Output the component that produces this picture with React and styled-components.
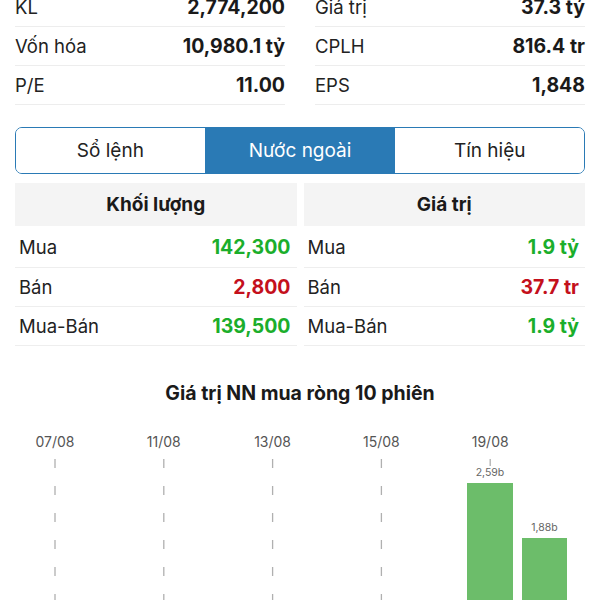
import React from 'react';
import styled, { createGlobalStyle } from 'styled-components';

const GlobalStyle = createGlobalStyle`
  body {
    margin: 0;
    background: #fff;
    font-family: Inter, "Noto Sans", sans-serif;
    color: #1c1c1c;
  }
`;

const stats = [
  [['KL', '2,774,200'], ['Giá trị', '37.3 tỷ']],
  [['Vốn hóa', '10,980.1 tỷ'], ['CPLH', '816.4 tr']],
  [['P/E', '11.00'], ['EPS', '1,848']],
];

const tabs = ['Sổ lệnh', 'Nước ngoài', 'Tín hiệu'];

const volume = [
  ['Mua', '142,300', 'up'],
  ['Bán', '2,800', 'down'],
  ['Mua-Bán', '139,500', 'up'],
];
const value = [
  ['Mua', '1.9 tỷ', 'up'],
  ['Bán', '37.7 tr', 'down'],
  ['Mua-Bán', '1.9 tỷ', 'up'],
];

const dates = ['07/08', '11/08', '13/08', '15/08', '19/08'];
const bars = [
  { x: 467, w: 46, top: 72, label: '2,59b' },
  { x: 522, w: 45, top: 127, label: '1,88b' },
];

const Page = styled.div`
  height: 600px;
  overflow: hidden;
`;

const Content = styled.div`
  padding: 0 15px;
  margin-top: -12px;
`;

const StatsGrid = styled.div`
  display: grid;
  grid-template-columns: 1fr 1fr;
  column-gap: 30px;
`;

const StatRow = styled.div`
  display: flex;
  justify-content: space-between;
  align-items: center;
  height: 38px;
  border-bottom: 1px solid #ededed;
  font-size: 18.5px;
`;

const Label = styled.span`
  color: #222;
`;

const StatValue = styled.span`
  font-weight: 700;
  font-size: 19.5px;
  color: #1a1a1a;
`;

const Tabs = styled.div`
  box-sizing: border-box;
  margin-top: 22px;
  display: flex;
  height: 47px;
  border: 1.5px solid #2a7ab5;
  border-radius: 7px;
  overflow: hidden;
`;

const Tab = styled.div`
  flex: 1;
  display: flex;
  align-items: center;
  justify-content: center;
  font-size: 19px;
  color: ${(p) => (p.$active ? '#fff' : '#222')};
  background: ${(p) => (p.$active ? '#2a7ab5' : '#fff')};
  & + & {
    border-left: 1px solid #2a7ab5;
  }
`;

const Tables = styled.div`
  margin-top: 9px;
  display: grid;
  grid-template-columns: 1fr 1fr;
  column-gap: 7px;
`;

const TableHead = styled.div`
  height: 43px;
  display: flex;
  align-items: center;
  justify-content: center;
  background: #f4f4f4;
  font-weight: 700;
  font-size: 19px;
  color: #1a1a1a;
`;

const TableRow = styled.div`
  height: ${(p) => (p.$first ? 41 : 38)}px;
  display: flex;
  justify-content: space-between;
  align-items: center;
  padding: 0 6px 0 4px;
  border-bottom: 1px solid #eeeeee;
  font-size: 18.5px;
`;

const Amount = styled.span`
  font-weight: 700;
  font-size: 19.5px;
  color: ${(p) => (p.$tone === 'up' ? '#1bae2b' : '#c4101c')};
`;

const ChartTitle = styled.div`
  margin-top: 36px;
  text-align: center;
  font-weight: 700;
  font-size: 19.5px;
  line-height: 22px;
  color: #1a1a1a;
`;

const ChartBox = styled.svg`
  display: block;
  margin-top: 7px;
`;

function FlowTable({ title, rows }) {
  return (
    <div>
      <TableHead>{title}</TableHead>
      {rows.map(([l, v, t], i) => (
        <TableRow key={l} $first={i === 0}>
          <Label>{l}</Label>
          <Amount $tone={t}>{v}</Amount>
        </TableRow>
      ))}
    </div>
  );
}

export default function App() {
  return (
    <Page>
      <GlobalStyle />
      <Content>
        <StatsGrid>
          {stats.flat().map(([l, v]) => (
            <StatRow key={l}>
              <Label>{l}</Label>
              <StatValue>{v}</StatValue>
            </StatRow>
          ))}
        </StatsGrid>
        <Tabs>
          {tabs.map((t, i) => (
            <Tab key={t} $active={i === 1}>{t}</Tab>
          ))}
        </Tabs>
        <Tables>
          <FlowTable title="Khối lượng" rows={volume} />
          <FlowTable title="Giá trị" rows={value} />
        </Tables>
      </Content>
      <ChartTitle>Giá trị NN mua ròng 10 phiên</ChartTitle>
      <ChartBox width="600" height="200" viewBox="0 0 600 200">
        {dates.map((d, i) => {
          const x = 55 + i * 108.8;
          return (
            <g key={d}>
              <text x={x} y={36} textAnchor="middle" fontSize="14" fill="#555" fontFamily="Inter, sans-serif">{d}</text>
              <line x1={x} y1={48} x2={x} y2={200} stroke="#b0b0b0" strokeWidth="1.3" strokeDasharray="9 18" />
            </g>
          );
        })}
        {bars.map((b) => (
          <g key={b.label}>
            <rect x={b.x} y={b.top} width={b.w} height={200 - b.top} fill="#6cbd6a" />
            <rect x={b.x + b.w / 2 - 14} y={b.top - 17} width="28" height="13" fill="#fff" />
            <text x={b.x + b.w / 2} y={b.top - 7} textAnchor="middle" fontSize="10.5" fill="#666" fontFamily="Inter, sans-serif">{b.label}</text>
          </g>
        ))}
      </ChartBox>
    </Page>
  );
}
